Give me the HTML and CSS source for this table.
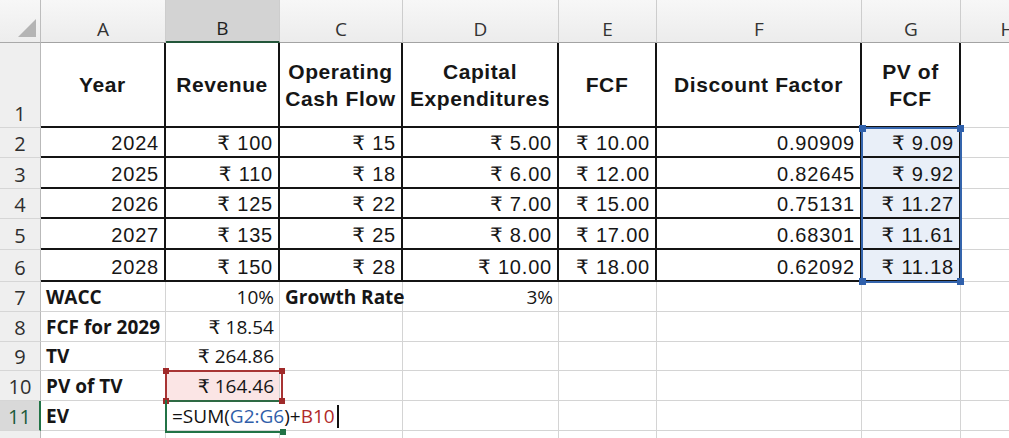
FILE: index.html
```html
<!DOCTYPE html>
<html>
<head>
<meta charset="utf-8">
<link rel="stylesheet" href="styles.css">
</head>
<body>
<div class="sheet">
  <div class="corner"><span class="tri"></span></div>
  <div class="ch">A</div><div class="ch sel">B</div><div class="ch">C</div><div class="ch">D</div><div class="ch">E</div><div class="ch">F</div><div class="ch">G</div><div class="ch">H</div>

  <div class="rh">1</div>
  <div class="c b hd">Year</div><div class="c b hd">Revenue</div><div class="c b hd">Operating<br>Cash Flow</div><div class="c b hd">Capital<br>Expenditures</div><div class="c b hd">FCF</div><div class="c b hd">Discount Factor</div><div class="c b hd">PV of<br>FCF</div><div class="c"></div>

  <div class="rh">2</div>
  <div class="c b r">2024</div><div class="c b r">₹ 100</div><div class="c b r">₹ 15</div><div class="c b r">₹ 5.00</div><div class="c b r">₹ 10.00</div><div class="c b r">0.90909</div><div class="c b r blue">₹ 9.09</div><div class="c"></div>

  <div class="rh">3</div>
  <div class="c b r">2025</div><div class="c b r">₹ 110</div><div class="c b r">₹ 18</div><div class="c b r">₹ 6.00</div><div class="c b r">₹ 12.00</div><div class="c b r">0.82645</div><div class="c b r blue">₹ 9.92</div><div class="c"></div>

  <div class="rh">4</div>
  <div class="c b r">2026</div><div class="c b r">₹ 125</div><div class="c b r">₹ 22</div><div class="c b r">₹ 7.00</div><div class="c b r">₹ 15.00</div><div class="c b r">0.75131</div><div class="c b r blue">₹ 11.27</div><div class="c"></div>

  <div class="rh">5</div>
  <div class="c b r">2027</div><div class="c b r">₹ 135</div><div class="c b r">₹ 25</div><div class="c b r">₹ 8.00</div><div class="c b r">₹ 17.00</div><div class="c b r">0.68301</div><div class="c b r blue">₹ 11.61</div><div class="c"></div>

  <div class="rh">6</div>
  <div class="c b r">2028</div><div class="c b r">₹ 150</div><div class="c b r">₹ 28</div><div class="c b r">₹ 10.00</div><div class="c b r">₹ 18.00</div><div class="c b r">0.62092</div><div class="c b r blue">₹ 11.18</div><div class="c"></div>

  <div class="rh">7</div>
  <div class="c k bold">WACC</div><div class="c k r">10%</div><div class="c k bold">Growth Rate</div><div class="c k r">3%</div><div class="c"></div><div class="c"></div><div class="c"></div><div class="c"></div>

  <div class="rh">8</div>
  <div class="c k bold">FCF for 2029</div><div class="c k r">₹ 18.54</div><div class="c"></div><div class="c"></div><div class="c"></div><div class="c"></div><div class="c"></div><div class="c"></div>

  <div class="rh">9</div>
  <div class="c k bold">TV</div><div class="c k r">₹ 264.86</div><div class="c"></div><div class="c"></div><div class="c"></div><div class="c"></div><div class="c"></div><div class="c"></div>

  <div class="rh">10</div>
  <div class="c k bold">PV of TV</div><div class="c k r red">₹ 164.46</div><div class="c"></div><div class="c"></div><div class="c"></div><div class="c"></div><div class="c"></div><div class="c"></div>

  <div class="rh active">11</div>
  <div class="c k bold">EV</div><div class="c k edit"><span>=SUM(</span><span class="ref-b">G2:G6</span><span>)+</span><span class="ref-r">B10</span><span class="caret"></span></div><div class="c"></div><div class="c"></div><div class="c"></div><div class="c"></div><div class="c"></div><div class="c"></div>

  <div class="rh"></div>
  <div class="c"></div><div class="c"></div><div class="c"></div><div class="c"></div><div class="c"></div><div class="c"></div><div class="c"></div><div class="c"></div>

  <div class="range range-blue"><i class="sq tl"></i><i class="sq tr"></i><i class="sq bl"></i><i class="sq br"></i></div>
  <div class="range range-red"><i class="sq tl"></i><i class="sq tr"></i><i class="sq bl"></i><i class="sq br"></i></div>
  <div class="range range-green"><i class="sq br"></i></div>
</div>
</body>
</html>
```

FILE: styles.css
```css
* { box-sizing: border-box; margin: 0; padding: 0; }
html, body { width: 1009px; height: 438px; overflow: hidden; background: #fff; }
body { font-family: "Liberation Sans", "DejaVu Sans", Arial, sans-serif; color: #161616; }

.sheet {
  position: relative;
  display: grid;
  grid-template-columns: 41px 125px 114px 123px 156px 98px 205px 99px 94px;
  grid-template-rows: 43px 85px 30px 31px 30px 31px 32px 30px 30px 29px 30px 30px 30px;
  width: 1009px;
  height: 438px;
  overflow: hidden;
}

.corner {
  background: linear-gradient(#f7f7f7, #ededed);
  border-right: 1px solid #bdbdbd;
  border-bottom: 1px solid #a9a9a9;
  display: flex;
  align-items: flex-end;
  justify-content: flex-end;
  padding: 0 4px 5px 0;
}
.tri {
  width: 0; height: 0;
  border-left: 18px solid transparent;
  border-bottom: 18px solid #b4b4b4;
}

.ch {
  background: linear-gradient(#f7f7f7, #ececec);
  font-family: "Open Sans", "DejaVu Sans", sans-serif;
  font-size: 19px;
  line-height: 22px;
  color: #333;
  display: flex;
  align-items: flex-end;
  justify-content: center;
  padding-bottom: 2px;
  border-right: 1px solid #cdcdcd;
  border-bottom: 1px solid #a3a3a3;
}
.ch.sel {
  background: #d3d3d3;
  color: #1f1f1f;
  border-bottom: 2px solid #23563a;
}

.rh {
  background: #efefef;
  font-family: "Open Sans", "DejaVu Sans", sans-serif;
  font-size: 20px;
  line-height: 26px;
  color: #2e2e2e;
  display: flex;
  align-items: flex-end;
  justify-content: center;
  padding-bottom: 0;
  border-right: 1px solid #b9b9b9;
  border-bottom: 1px solid #d6d6d6;
}
.rh.active {
  background: #d9d9d9;
  color: #1d5b3a;
  border-right: 2px solid #217346;
}

.c {
  display: flex;
  align-items: flex-end;
  padding: 0 5px 1px 5px;
  white-space: nowrap;
  font-size: 20px;
  line-height: 23px;
  letter-spacing: 0.8px;
  border-right: 1px solid #d4d4d4;
  border-bottom: 1px solid #d4d4d4;
}
.c > * { flex-shrink: 0; }
.r { justify-content: flex-end; }
.b {
  border-right: 2px solid #141414;
  border-bottom: 2px solid #141414;
}
.hd {
  font-weight: 700;
  font-size: 21px;
  letter-spacing: 0.6px;
  line-height: 27px;
  justify-content: center;
  align-items: center;
  text-align: center;
  padding: 0 2px;
}
.k {
  font-family: "Open Sans", "DejaVu Sans", sans-serif;
  font-size: 19px;
  letter-spacing: 0;
  line-height: 25px;
  padding-bottom: 1px;
}
.bold { font-weight: 700; }

.blue { background: #e9eff8; }
.red { background: #fbe5e5; }

.edit {
  border-right-color: transparent;
  padding-left: 6px;
  color: #111;
}
.ref-b { color: #2f5ea9; }
.ref-r { color: #b02a2a; }
.caret {
  display: inline-block;
  width: 2px;
  height: 23px;
  background: #111;
  margin-left: 2px;
  margin-bottom: 1px;
  align-self: flex-end;
}

.range { position: absolute; pointer-events: none; }
.range-blue {
  left: 861px; top: 127px; width: 101px; height: 156px;
  border: 2px solid #3565ad;
}
.range-red {
  left: 165px; top: 370px; width: 118px; height: 32px;
  border: 2px solid #a83434;
  border-bottom-color: #2e6a44;
}
.range-green {
  left: 165px; top: 400px; width: 117px; height: 33px;
  border-left: 2px solid #217346;
  border-bottom: 2px solid #217346;
}
.sq { position: absolute; width: 7px; height: 7px; }
.range-blue .sq { background: #2f60ab; }
.range-red .sq { background: #a02a2a; width: 6px; height: 6px; }
.range-green .sq { background: #217346; width: 6px; height: 6px; }
.tl { left: -4px; top: -4px; }
.tr { right: -4px; top: -4px; }
.bl { left: -4px; bottom: -4px; }
.br { right: -4px; bottom: -4px; }
```
